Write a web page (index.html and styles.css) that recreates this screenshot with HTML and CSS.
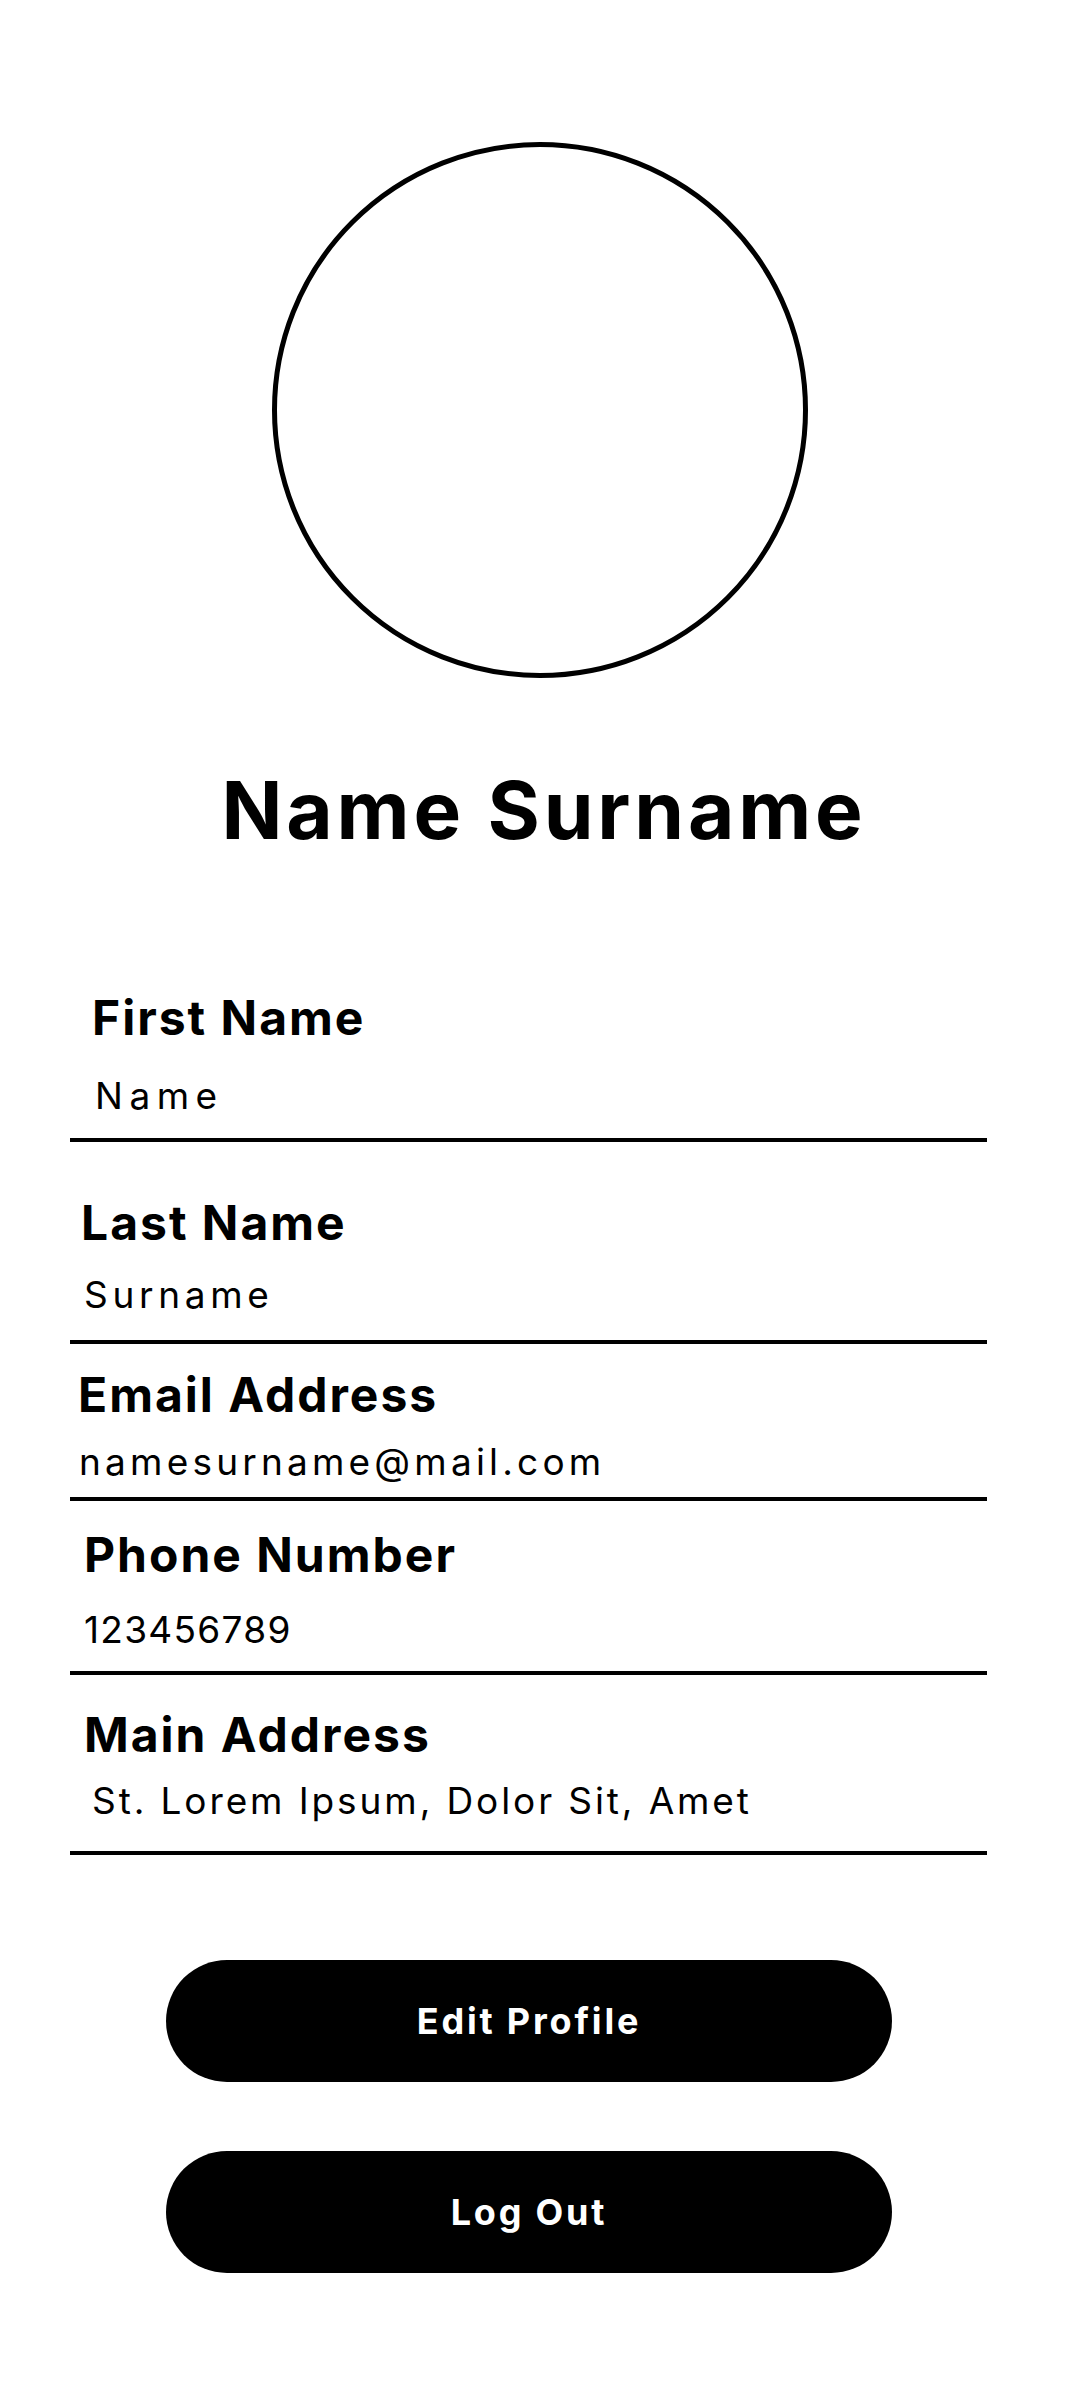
FILE: index.html
```html
<!DOCTYPE html>
<html lang="en">
<head>
<meta charset="utf-8">
<title>Profile</title>
<link rel="stylesheet" href="styles.css">
</head>
<body>
<main class="profile">
  <div class="avatar"></div>
  <h1 class="name">Name Surname</h1>
  <section class="fields">
    <div class="field field--first"><span class="label">First Name</span><span class="value">Name</span></div>
    <div class="field field--last"><span class="label">Last Name</span><span class="value">Surname</span></div>
    <div class="field field--email"><span class="label">Email Address</span><span class="value">namesurname@mail.com</span></div>
    <div class="field field--phone"><span class="label">Phone Number</span><span class="value">123456789</span></div>
    <div class="field field--address"><span class="label">Main Address</span><span class="value">St. Lorem Ipsum, Dolor Sit, Amet</span></div>
  </section>
  <div class="actions">
    <button class="btn" type="button">Edit Profile</button>
    <button class="btn" type="button">Log Out</button>
  </div>
</main>
</body>
</html>
```
FILE: styles.css
```css
* { box-sizing: border-box; margin: 0; padding: 0; }
body { margin: 0; background: #fff; color: #000; font-family: Inter, "Open Sans", sans-serif; }
.profile { display: flex; flex-direction: column; padding-top: 142px; }
.avatar { width: 536px; height: 536px; border: 5px solid #000; border-radius: 50%; align-self: center; }
.name { margin-top: 92px; font-size: 80px; line-height: 80px; font-weight: 700; letter-spacing: 3.8px; text-align: center; padding-left: 8px; }
.fields { margin: 144px 0 0 70px; width: 917px; display: flex; flex-direction: column; }
.field { display: flex; flex-direction: column; border-bottom: 4px solid #000; margin-top: var(--gap, 0px); padding-bottom: var(--pad, 24px); }
.label { font-size: 48px; line-height: 48px; font-weight: 700; letter-spacing: 2px; padding-left: var(--label-indent, 14px); }
.value { font-size: 37px; line-height: 37px; font-weight: 400; letter-spacing: var(--value-track, 3.5px); margin-top: var(--value-gap, 30px); padding-left: var(--value-indent, 14px); }
.field--first { --gap: 0px; --label-indent: 22px; --value-indent: 25px; --value-gap: 34.5px; --pad: 24px; --value-track: 6.5px; }
.field--last { --gap: 57.6px; --label-indent: 11px; --value-indent: 14px; --value-gap: 28.5px; --pad: 27px; --value-track: 4.7px; }
.field--email { --gap: 27.6px; --label-indent: 8px; --value-indent: 9px; --value-gap: 23.5px; --pad: 17px; --value-track: 4.2px; }
.field--phone { --gap: 30.6px; --label-indent: 14px; --value-indent: 14px; --value-gap: 31.5px; --pad: 23px; --value-track: 1.3px; }
.field--address { --gap: 36.6px; --label-indent: 14px; --value-indent: 22px; --value-gap: 22.5px; --pad: 32px; --value-track: 2.9px; }
.actions { display: flex; flex-direction: column; gap: 69px; margin: 105px 0 0 166px; }
.btn { width: 726px; height: 122px; border: 0; border-radius: 61px; background: #000; color: #fff; font-family: inherit; font-size: 36px; font-weight: 700; letter-spacing: 2.8px; display: flex; align-items: center; justify-content: center; }
```
